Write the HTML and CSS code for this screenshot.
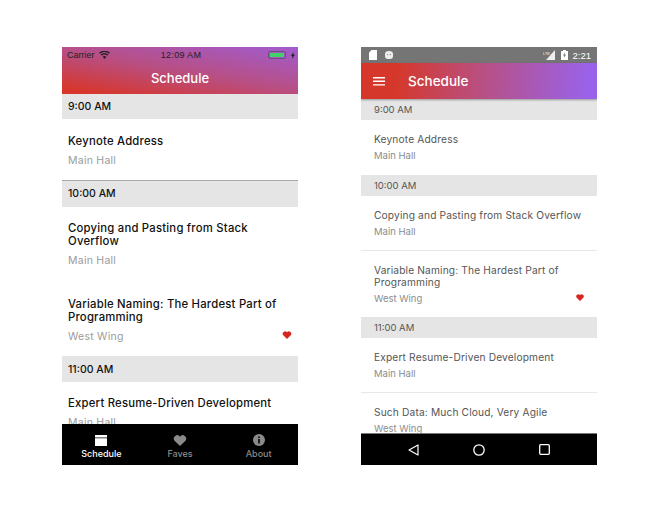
FILE: index.html
```html
<!DOCTYPE html>
<html lang="en">
<head>
<meta charset="utf-8">
<title>Schedule</title>
<link rel="stylesheet" href="styles.css">
</head>
<body>
<main class="stage">
  <section class="phone ios">
    <header class="ios-head">
      <div class="ios-status">
        <div class="ios-status-left">
          <span>Carrier</span>
          <svg class="wifi" width="11" height="8" viewBox="0 0 11 8"><path d="M5.5 8 3.6 5.7a3 3 0 0 1 3.8 0zM2.7 4.7l-1-1.1a6 6 0 0 1 7.6 0l-1 1.1a4.4 4.4 0 0 0-5.6 0zM.9 2.7 0 1.7a8.4 8.4 0 0 1 11 0l-.9 1a7 7 0 0 0-9.2 0z" fill="#222"/></svg>
        </div>
        <span class="ios-clock">12:09 AM</span>
        <div class="ios-status-right">
          <span class="battery"><span class="battery-fill"></span></span>
          <svg width="4" height="7" viewBox="0 0 4 7"><path d="M2.5 0 0 4h1.5L1 7l3-4.2H2.4z" fill="#222"/></svg>
        </div>
      </div>
      <h1 class="ios-title">Schedule</h1>
    </header>
    <div class="ios-list">
      <h2 class="ios-time">9:00 AM</h2>
      <article class="ios-item ios-item-keynote">
        <h3>Keynote Address</h3>
        <p>Main Hall</p>
      </article>
      <h2 class="ios-time ios-time-ruled">10:00 AM</h2>
      <article class="ios-item ios-item-copy">
        <h3>Copying and Pasting from Stack Overflow</h3>
        <p>Main Hall</p>
      </article>
      <article class="ios-item ios-item-naming">
        <h3>Variable Naming: The Hardest Part of Programming</h3>
        <p>West Wing</p>
        <svg class="heart ios-heart" width="10" height="8" viewBox="0 0 10 9"><path d="M5 9 .8 4.8A2.7 2.7 0 0 1 5 1.4a2.7 2.7 0 0 1 4.2 3.4z"/></svg>
      </article>
      <h2 class="ios-time ios-time-tall">11:00 AM</h2>
      <article class="ios-item">
        <h3>Expert Resume-Driven Development</h3>
        <p>Main Hall</p>
      </article>
    </div>
    <nav class="tabs">
      <div class="tab tab-active">
        <svg width="12" height="11" viewBox="0 0 12 11"><path d="M0 0h12v2.4H0zM0 3.2h12V11H0z" fill="#fff"/></svg>
        <span>Schedule</span>
      </div>
      <div class="tab">
        <svg width="14" height="11" viewBox="0 0 14 12"><path d="M7 12 1 6.2A3.6 3.6 0 0 1 7 1.8a3.6 3.6 0 0 1 6 4.4z" fill="#8a8a8a"/></svg>
        <span>Faves</span>
      </div>
      <div class="tab">
        <svg width="12" height="12" viewBox="0 0 12 12"><circle cx="6" cy="6" r="6" fill="#8a8a8a"/><path d="M5.2 2.4h1.6V4H5.2zM5.2 5h1.6v4.6H5.2z" fill="#000"/></svg>
        <span>About</span>
      </div>
    </nav>
  </section>

  <section class="phone android">
    <div class="and-status">
      <div class="and-status-icons">
        <svg width="8" height="10" viewBox="0 0 8 10"><path d="M2.5 0H8v10H0V2.5z" fill="#fff"/></svg>
        <svg width="8" height="8" viewBox="0 0 8 8"><path d="M0 3a4 3 0 0 1 8 0v2a3 3 0 0 1-3 3H3a3 3 0 0 1-3-3z" fill="#eee"/><circle cx="2.7" cy="3.6" r=".6" fill="#757575"/><circle cx="5.3" cy="3.6" r=".6" fill="#757575"/></svg>
      </div>
      <div class="and-status-icons and-status-right">
        <svg width="13" height="10" viewBox="0 0 13 10"><path d="M12 0v10H3z" fill="#eee"/><text x="0" y="4.5" class="lte">LTE</text></svg>
        <svg width="7" height="10" viewBox="0 0 7 10"><path d="M2 0h3v1h2v9H0V1h2z" fill="#fff"/><path d="M4 2.5 2 5.6h1.2L3 7.8l2-3.1H3.8z" fill="#757575"/></svg>
        <span class="and-clock">2:21</span>
      </div>
    </div>
    <header class="and-bar">
      <svg width="12" height="9" viewBox="0 0 12 9"><path d="M0 0h12v1.4H0zM0 3.6h12V5H0zM0 7.2h12v1.4H0z" fill="#fff"/></svg>
      <h1 class="and-title">Schedule</h1>
    </header>
    <div class="and-list">
      <h2 class="and-time">9:00 AM</h2>
      <article class="and-item and-item-plain">
        <h3>Keynote Address</h3>
        <p>Main Hall</p>
      </article>
      <h2 class="and-time">10:00 AM</h2>
      <article class="and-item">
        <h3>Copying and Pasting from Stack Overflow</h3>
        <p>Main Hall</p>
      </article>
      <article class="and-item and-item-naming">
        <h3>Variable Naming: The Hardest Part of Programming</h3>
        <p>West Wing</p>
        <svg class="heart and-heart" width="8" height="7" viewBox="0 0 10 9"><path d="M5 9 .8 4.8A2.7 2.7 0 0 1 5 1.4a2.7 2.7 0 0 1 4.2 3.4z"/></svg>
      </article>
      <h2 class="and-time">11:00 AM</h2>
      <article class="and-item">
        <h3>Expert Resume-Driven Development</h3>
        <p>Main Hall</p>
      </article>
      <article class="and-item and-item-plain">
        <h3>Such Data: Much Cloud, Very Agile</h3>
        <p>West Wing</p>
      </article>
    </div>
    <nav class="softkeys">
      <svg width="11" height="12" viewBox="0 0 11 12"><path d="M10 1v10L1 6z" fill="none" stroke="#fff" stroke-width="1.2" stroke-linejoin="round"/></svg>
      <svg width="12" height="12" viewBox="0 0 12 12"><circle cx="6" cy="6" r="5.2" fill="none" stroke="#fff" stroke-width="1.3"/></svg>
      <svg width="11" height="11" viewBox="0 0 11 11"><rect x=".7" y=".7" width="9.6" height="9.6" rx="1" fill="none" stroke="#fff" stroke-width="1.3"/></svg>
    </nav>
  </section>
</main>
</body>
</html>
```
FILE: styles.css
```css
* { box-sizing: border-box; }
html, body { margin: 0; background: #fff; }
body { font-family: Inter, "Open Sans", sans-serif; }
h1, h2, h3, p { margin: 0; font-weight: 400; }

.stage { display: flex; gap: 63px; padding: 47px 62px; }
.phone { width: 236px; height: 418px; display: flex; flex-direction: column; overflow: hidden; }

/* iOS */
.ios-head { height: 47px; flex: none; background: linear-gradient(10deg, #d7362a 6%, #b84f84 50%, #a05cd0 100%); }
.ios-status { height: 16px; padding: 0 3px 0 5px; display: grid; grid-template-columns: 1fr auto 1fr; align-items: center; font-family: "Liberation Sans", sans-serif; font-size: 9px; color: #222; }
.ios-status-left { display: flex; align-items: center; gap: 4px; }
.ios-status-right { display: flex; align-items: center; justify-content: flex-end; gap: 5px; }
.ios-clock { letter-spacing: .3px; }
.battery { width: 18px; height: 8px; border: 1px solid #6e4a80; border-radius: 2px; padding: 1px; display: block; }
.battery-fill { display: block; height: 100%; background: #3fd06a; }
.ios-title { text-align: center; color: #fff; font-size: 13px; font-weight: 500; line-height: 30px; }
.ios-list { flex: 1; min-height: 0; overflow: hidden; }
.ios-time { height: 25px; background: #e5e5e5; padding: 0 6px; font-size: 10.5px; font-weight: 500; line-height: 26px; color: #111; }
.ios-time-ruled { height: 27px; line-height: 26px; border-top: 1px solid #aaa; }
.ios-time-tall { height: 26px; line-height: 27px; }
.ios-item { position: relative; padding: 15px 6px 0; height: 75px; }
.ios-item h3 { font-size: 11.3px; font-weight: 500; line-height: 13px; letter-spacing: .22px; color: #111; }
.ios-item p { font-size: 10.5px; line-height: 13px; letter-spacing: .25px; color: #9b9b9b; margin-top: 6px; }
.ios-item-keynote { height: 61px; padding-top: 16px; }
.ios-item-copy { height: 76px; }
.ios-item-naming { height: 73px; }
.ios-heart { position: absolute; right: 6px; top: 48px; }
.heart { fill: #d7261e; }
.tabs { height: 41px; flex: none; background: #000; display: grid; grid-template-columns: repeat(3, 1fr); }
.tab { display: flex; flex-direction: column; align-items: center; justify-content: flex-end; gap: 3px; padding-bottom: 7px; font-size: 9px; font-weight: 500; line-height: 9px; color: #8a8a8a; }
.tab-active { color: #fff; }

/* Android */
.and-status { height: 16px; flex: none; background: #757575; display: flex; justify-content: space-between; align-items: center; padding: 0 6px 0 8px; }
.and-status-icons { display: flex; align-items: center; gap: 8px; }
.and-status-right { gap: 5px; }
.lte { font: 4px "Liberation Sans", sans-serif; fill: #eee; }
.and-clock { font-family: "Liberation Sans", sans-serif; font-size: 9.5px; color: #fff; }
.and-bar { height: 36px; flex: none; position: relative; display: flex; align-items: center; gap: 23px; padding-left: 12px; background: linear-gradient(95deg, #d5382a 15%, #b94f80 50%, #9a62e8 95%); box-shadow: 0 1px 2px rgba(0,0,0,.35); }
.and-title { color: #fff; font-size: 13.5px; font-weight: 500; }
.and-list { flex: 1; min-height: 0; overflow: hidden; }
.and-time { height: 21px; background: #e5e5e5; padding: 0 13px; font-size: 9.5px; line-height: 21px; color: #555; }
.and-item { position: relative; padding: 13px 6px 0 13px; height: 55px; border-bottom: 1px solid #e8e8e8; }
.and-item h3 { font-size: 10.2px; line-height: 12px; letter-spacing: .15px; color: #555; }
.and-item p { font-size: 9.5px; line-height: 12px; color: #8c8c8c; margin-top: 5px; }
.and-item-plain { border-bottom: 0; }
.and-item-naming { height: 66px; border-bottom: 0; }
.and-item-naming h3 { padding-right: 20px; }
.and-heart { position: absolute; right: 13px; top: 43px; }
.softkeys { height: 32px; flex: none; background: #000; display: flex; justify-content: space-between; align-items: center; padding: 0 47px; border-top: 1px solid #777; }
```
